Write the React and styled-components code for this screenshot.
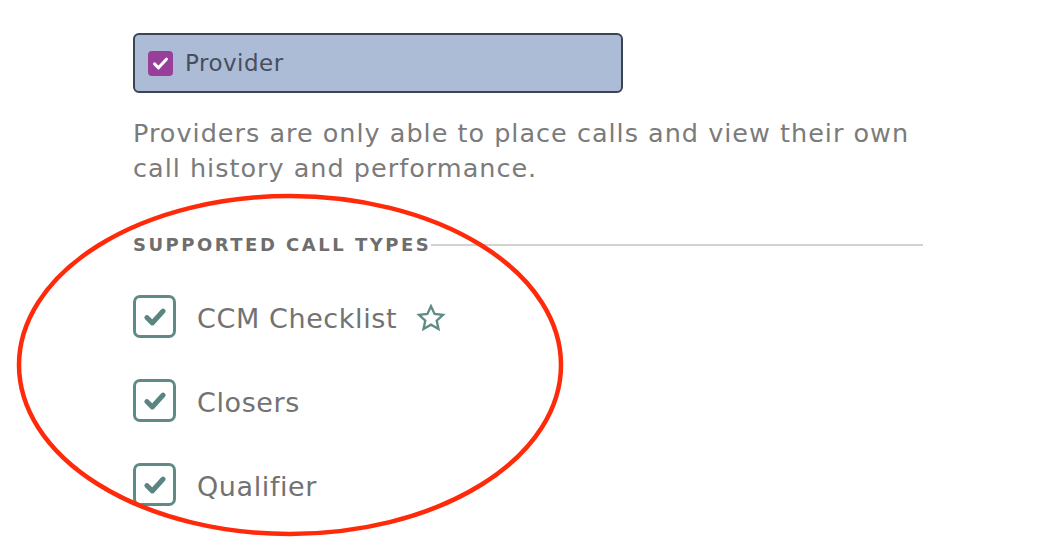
import React from "react";
import styled, { createGlobalStyle } from "styled-components";

const Global = createGlobalStyle`
  html, body { margin: 0; padding: 0; background: #ffffff; }
  body { font-family: "DejaVu Sans", "Open Sans", sans-serif; }
`;

const Page = styled.div`
  position: relative;
  width: 1046px;
  height: 540px;
  overflow: hidden;
  box-sizing: border-box;
  padding: 33px 0 0 133px;
`;

const Column = styled.div`
  width: 790px;
  display: flex;
  flex-direction: column;
`;

const RoleBox = styled.label`
  box-sizing: border-box;
  width: 490px;
  height: 60px;
  border: 2px solid #3b4356;
  border-radius: 6px;
  background: #adbcd6;
  display: flex;
  align-items: center;
  gap: 12px;
  padding-left: 13px;
  font-size: 23px;
  letter-spacing: 0.5px;
  color: #474e5e;
`;

const PurpleBox = styled.span`
  width: 25px;
  height: 25px;
  border-radius: 4px;
  background: #983f99;
  display: flex;
  align-items: center;
  justify-content: center;
`;

const Description = styled.p`
  margin: 23px 0 0;
  font-size: 25.5px;
  letter-spacing: 1px;
  line-height: 35px;
  color: #7b7b7b;
`;

const SectionHead = styled.div`
  margin-top: 48px;
  display: flex;
  align-items: center;
  width: 790px;
`;

const SectionTitle = styled.span`
  font-size: 18px;
  font-weight: 700;
  letter-spacing: 2.5px;
  color: #6e6e6e;
  line-height: 22px;
`;

const Rule = styled.span`
  flex: 1;
  height: 2px;
  background: #d2d2d2;
`;

const List = styled.div`
  margin-top: 39px;
  display: flex;
  flex-direction: column;
  gap: 41px;
`;

const Row = styled.label`
  display: flex;
  align-items: center;
  height: 43px;
  gap: 21px;
  font-size: 27px;
  letter-spacing: 0.6px;
  color: #727272;
`;

const RowText = styled.span`
  padding-top: 3px;
`;

const TealBox = styled.span`
  box-sizing: border-box;
  width: 43px;
  height: 43px;
  border: 3px solid #5f8a85;
  border-radius: 7px;
  display: flex;
  align-items: center;
  justify-content: center;
  flex: none;
`;

const StarIcon = styled.svg`
  margin-left: -2px;
  margin-top: 2px;
`;

const Ellipse = styled.svg`
  position: absolute;
  left: 0;
  top: 0;
  pointer-events: none;
`;

const Check = ({ size, color, width }) => (
  <svg width={size} height={size} viewBox="0 0 24 24">
    <path
      d="M4.5 12.5 L9.5 17.5 L19.5 6.5"
      fill="none"
      stroke={color}
      strokeWidth={width}
      strokeLinecap="round"
      strokeLinejoin="round"
    />
  </svg>
);

const Star = () => (
  <StarIcon width="30" height="28" viewBox="0 0 30 28">
    <path
      d="M15 2.2 L18.6 10 L27 10.9 L20.7 16.6 L22.5 25 L15 20.7 L7.5 25 L9.3 16.6 L3 10.9 L11.4 10 Z"
      fill="none"
      stroke="#5f8a85"
      strokeWidth="2.3"
      strokeLinejoin="miter"
    />
  </StarIcon>
);

const types = [
  { name: "CCM Checklist", star: true },
  { name: "Closers" },
  { name: "Qualifier" },
];

export default function App() {
  return (
    <Page>
      <Global />
      <Column>
        <RoleBox>
          <PurpleBox>
            <Check size={19} color="#ffffff" width={3.8} />
          </PurpleBox>
          Provider
        </RoleBox>
        <Description>
          Providers are only able to place calls and view their own call history
          and performance.
        </Description>
        <SectionHead>
          <SectionTitle>SUPPORTED CALL TYPES</SectionTitle>
          <Rule />
        </SectionHead>
        <List>
          {types.map((t) => (
            <Row key={t.name}>
              <TealBox>
                <Check size={26} color="#5b8581" width={4.6} />
              </TealBox>
              <RowText>{t.name}</RowText>
              {t.star && <Star />}
            </Row>
          ))}
        </List>
      </Column>
      <Ellipse width="1046" height="540" viewBox="0 0 1046 540">
        <ellipse
          cx="290"
          cy="365"
          rx="271"
          ry="169"
          fill="none"
          stroke="#ff2a0a"
          strokeWidth="4.5"
        />
      </Ellipse>
    </Page>
  );
}
